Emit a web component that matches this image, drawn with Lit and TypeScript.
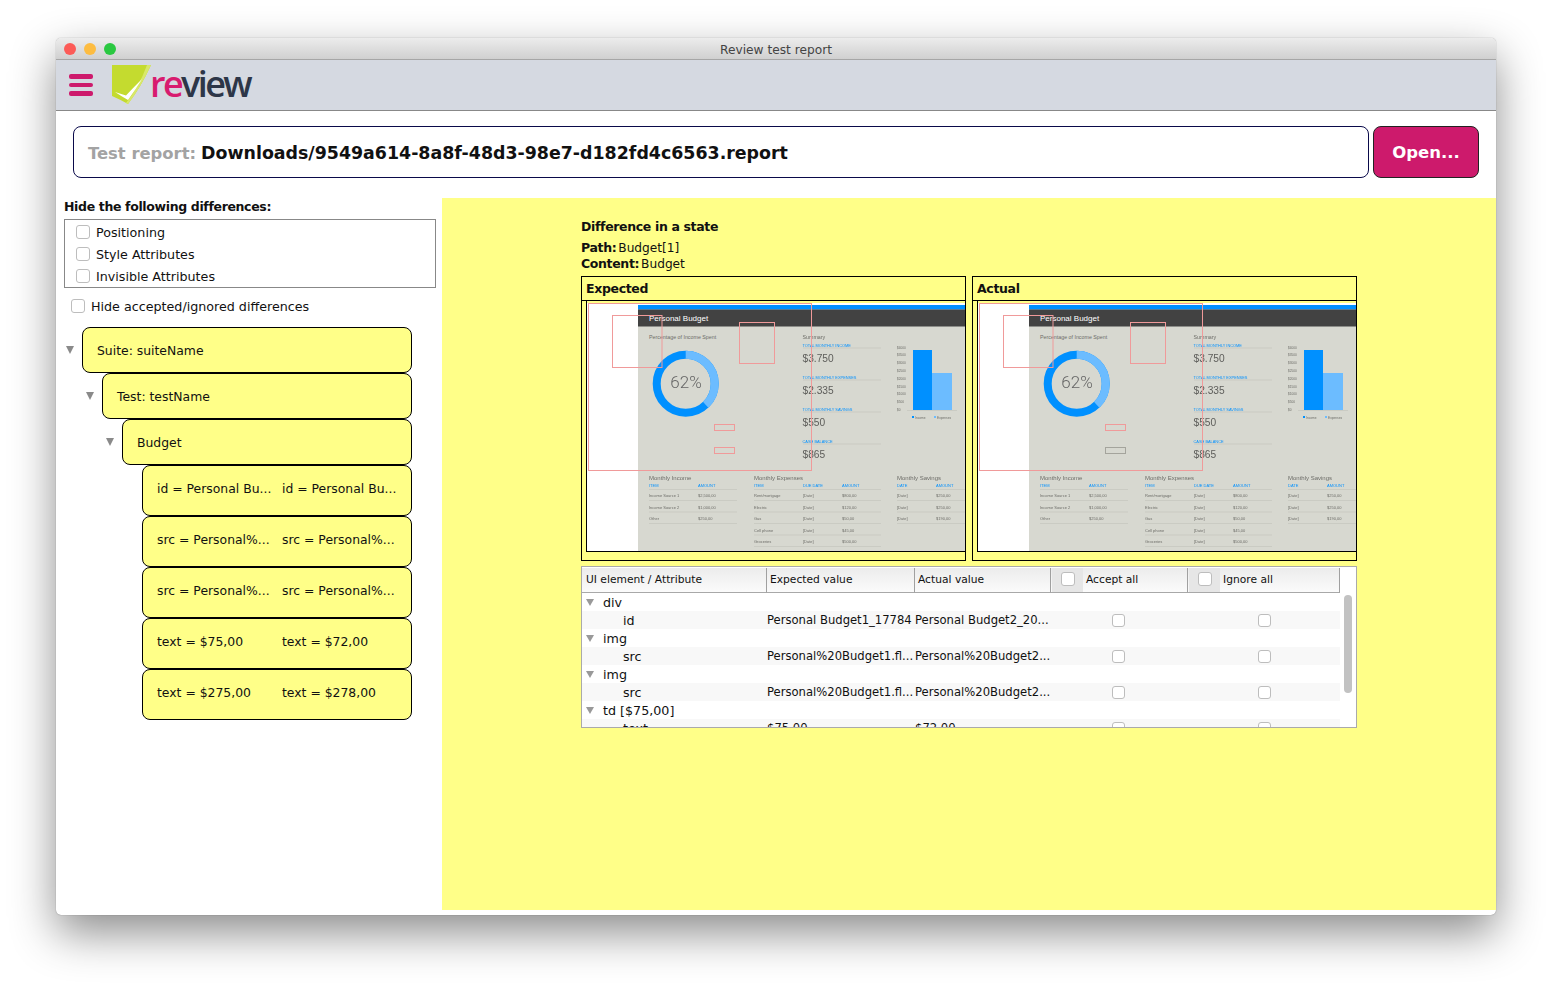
import { LitElement, html, css, svg } from 'lit';
import { customElement, property } from 'lit/decorators.js';

const BLUE = '#0090ff';
const LIGHT = '#6cbcff';
const RED = '#f09a9a';

// the small report picture shown in the Expected and Actual boxes
@customElement('budget-shot')
export class BudgetShot extends LitElement {
  @property({ type: Boolean }) actual = false;

  static styles = css`
    :host {
      display: block;
      width: 380px;
      height: 248px;
      overflow: hidden;
      background: #fff;
    }
    svg {
      display: block;
      font-family: 'Liberation Sans', sans-serif;
      filter: blur(0.25px);
    }
    .muted { fill: #6d6d68; }
  `;

  summary(label: string, value: string, y: number) {
    return svg`
      <text x="215.5" y=${y} font-size="3.9" fill=${BLUE}>${label}</text>
      <line x1="216" x2="294" y1=${y + 1} y2=${y + 1} stroke="#c4c5bd" stroke-width=".7" />
      <text x="215.5" y=${y + 15} font-size="10.2" fill="#5d5d5a">${value}</text>
    `;
  }

  table(title: string, x: number, right: number, cols: { x: number; label: string }[], rows: string[][]) {
    return svg`
      <text x=${x} y="177" font-size="6" class="muted">${title}</text>
      ${cols.map(c => svg`<text x=${c.x} y="184" font-size="4" fill=${BLUE}>${c.label}</text>`)}
      <line x1=${x} x2=${right} y1="186.5" y2="186.5" stroke="#c4c5bd" stroke-width=".7" />
      ${rows.map((row, i) => svg`
        ${row.map((cell, j) => svg`<text x=${cols[j].x} y=${194 + i * 11.5} font-size="4" class="muted">${cell}</text>`)}
        <line x1=${x} x2=${right} y1=${197.5 + i * 11.5} y2=${197.5 + i * 11.5} stroke="#c4c5bd" stroke-width=".7" />
      `)}
    `;
  }

  render() {
    const ticks = ['$4000', '$3500', '$3000', '$2500', '$2000', '$1500', '$1000', '$500', '$0'];
    return html`
      <svg width="380" height="248" viewBox="0 0 380 248">
        <rect x="51" y="2" width="329" height="246" fill="#d7d8d0" />
        <rect x="51" y="2" width="329" height="4.5" fill=${BLUE} />
        <rect x="51" y="6.5" width="329" height="17" fill="#424242" />
        <text x="62" y="18" font-size="8" fill="#fff">Personal Budget</text>

        <text x="62" y="36" font-size="5.3" class="muted">Percentage of Income Spent</text>
        <circle cx="98.7" cy="80.7" r="29" fill="none" stroke=${BLUE} stroke-width="8" />
        <circle cx="98.7" cy="80.7" r="29" fill="none" stroke=${LIGHT} stroke-width="8"
          stroke-dasharray="69 182.2" transform="rotate(-90 98.7 80.7)" />
        <text x="99" y="85" font-size="17" text-anchor="middle" fill="#666" style="font-family: Roboto, sans-serif; font-weight: 300">62%</text>

        <text x="215.5" y="36" font-size="5.3" class="muted">Summary</text>
        ${this.summary('TOTAL MONTHLY INCOME', '$3.750', 44)}
        ${this.summary('TOTAL MONTHLY EXPENSES', '$2.335', 76)}
        ${this.summary('TOTAL MONTHLY SAVINGS', '$550', 108)}
        ${this.summary('CASH BALANCE', '$865', 140)}

        ${ticks.map((t, i) => svg`<text x="310" y=${45.5 + i * 7.8} font-size="3.2" class="muted">${t}</text>`)}
        <line x1="320" x2="370" y1="107.5" y2="107.5" stroke="#c4c5bd" stroke-width=".7" />
        <rect x="326" y="47" width="19" height="60" fill=${BLUE} />
        <rect x="345" y="70" width="20" height="37" fill=${LIGHT} />
        <rect x="325" y="113" width="2" height="2" fill=${BLUE} />
        <text x="328" y="115.5" font-size="3.2" class="muted">Income</text>
        <rect x="347" y="113" width="2" height="2" fill=${LIGHT} />
        <text x="350" y="115.5" font-size="3.2" class="muted">Expenses</text>

        ${this.table('Monthly Income', 62, 150,
          [{ x: 62, label: 'ITEM' }, { x: 111, label: 'AMOUNT' }],
          [['Income Source 1', '$2,500,00'], ['Income Source 2', '$1,000,00'], ['Other', '$250,00']])}
        ${this.table('Monthly Expenses', 167, 294,
          [{ x: 167, label: 'ITEM' }, { x: 216, label: 'DUE DATE' }, { x: 255, label: 'AMOUNT' }],
          [['Rent/mortgage', '[Date]', '$800,00'], ['Electric', '[Date]', '$120,00'], ['Gas', '[Date]', '$50,00'],
           ['Cell phone', '[Date]', '$45,00'], ['Groceries', '[Date]', '$500,00']])}
        ${this.table('Monthly Savings', 310, 380,
          [{ x: 310, label: 'DATE' }, { x: 349, label: 'AMOUNT' }],
          [['[Date]', '$250,00'], ['[Date]', '$250,00'], ['[Date]', '$190,00']])}

        <g fill="none" stroke=${RED} stroke-width="1">
          <rect x="1.5" y="0.5" width="223" height="167" />
          <rect x="25.5" y="12.5" width="49.5" height="52" />
          <rect x="152.5" y="19.5" width="35" height="41" />
          <rect x="127.5" y="121.5" width="20" height="6" />
          <rect x="127.5" y="144.5" width="20" height="6" stroke=${this.actual ? '#a4a49c' : RED} />
        </g>
      </svg>
    `;
  }
}

interface TreeNode {
  depth: number;
  open?: boolean;
  tall?: boolean;
  cells: string[];
}

const TREE: TreeNode[] = [
  { depth: 0, open: true, cells: ['Suite: suiteName'] },
  { depth: 1, open: true, cells: ['Test: testName'] },
  { depth: 2, open: true, cells: ['Budget'] },
  { depth: 3, tall: true, cells: ['id = Personal Bu...', 'id = Personal Bu...'] },
  { depth: 3, tall: true, cells: ['src = Personal%...', 'src = Personal%...'] },
  { depth: 3, tall: true, cells: ['src = Personal%...', 'src = Personal%...'] },
  { depth: 3, tall: true, cells: ['text = $75,00', 'text = $72,00'] },
  { depth: 3, tall: true, cells: ['text = $275,00', 'text = $278,00'] },
];

const ROWS = [
  { name: 'div' },
  { attr: 'id', expected: 'Personal Budget1_17784', actual: 'Personal Budget2_20...' },
  { name: 'img' },
  { attr: 'src', expected: 'Personal%20Budget1.fl...', actual: 'Personal%20Budget2...' },
  { name: 'img' },
  { attr: 'src', expected: 'Personal%20Budget1.fl...', actual: 'Personal%20Budget2...' },
  { name: 'td [$75,00]' },
  { attr: 'text', expected: '$75,00', actual: '$72,00' },
];

@customElement('app-root')
export class AppRoot extends LitElement {
  static styles = css`
    :host {
      display: block;
      padding: 38px 56px 74px;
      font-family: 'DejaVu Sans', sans-serif;
      font-size: 12.7px;
      color: #111;
    }
    .window {
      height: 877px;
      background: #fff;
      border-radius: 5px;
      box-shadow: 0 18px 45px rgba(0, 0, 0, 0.45), 0 0 1px rgba(0, 0, 0, 0.5);
      display: flex;
      flex-direction: column;
      overflow: hidden;
    }
    .titlebar {
      height: 22px;
      flex: none;
      box-sizing: border-box;
      display: flex;
      align-items: center;
      justify-content: center;
      position: relative;
      padding-top: 2px;
      background: linear-gradient(#ececec, #d0d0d0);
      border-bottom: 1px solid #a6a6a6;
      color: #444;
      font-size: 12.2px;
    }
    .lights {
      position: absolute;
      left: 8px;
      top: 5px;
      display: flex;
      gap: 8px;
    }
    .lights i {
      width: 12px;
      height: 12px;
      border-radius: 50%;
    }
    .toolbar {
      height: 51px;
      flex: none;
      box-sizing: border-box;
      display: flex;
      align-items: center;
      padding: 0 0 3px 13px;
      background: #d5d9e1;
      border-bottom: 1px solid #888;
    }
    .burger {
      display: flex;
      flex-direction: column;
      gap: 4px;
      width: 24px;
      margin-top: 3px;
    }
    .burger i {
      height: 4.4px;
      border-radius: 2px;
      background: #cd1a6c;
    }
    .logo {
      display: flex;
      align-items: center;
      margin-left: 18px;
    }
    .wordmark {
      margin-left: -1px;
      font-family: 'Open Sans', sans-serif;
      font-weight: 600;
      font-size: 36px;
      line-height: 40px;
      letter-spacing: -2.6px;
      color: #2d3648;
    }
    .wordmark b {
      font-weight: 600;
      color: #d81b6f;
    }
    .report-row {
      flex: none;
      display: flex;
      gap: 4px;
      padding: 15px 17px 20px;
    }
    .report {
      flex: 1;
      height: 52px;
      box-sizing: border-box;
      display: flex;
      align-items: center;
      padding: 2px 14px 0;
      border: 1px solid #0a0a4a;
      border-radius: 8px;
      font-size: 17.4px;
      font-weight: 700;
      white-space: nowrap;
    }
    .report span {
      color: #a3a3a3;
      font-size: 16.4px;
      margin-right: 5px;
    }
    .open {
      width: 106px;
      height: 52px;
      box-sizing: border-box;
      border: 1px solid #222;
      border-radius: 8px;
      background: #cd1a6c;
      color: #fff;
      font: 700 16.5px 'DejaVu Sans', sans-serif;
      padding: 0;
    }
    .main {
      flex: 1;
      display: flex;
      padding-bottom: 5px;
      min-height: 0;
    }
    .side {
      width: 386px;
      flex: none;
      box-sizing: border-box;
      padding: 0 6px 0 8px;
    }
    .side h2,
    .detail h3,
    .shot h4,
    .meta b {
      font-size: 12.5px;
      font-weight: 700;
      letter-spacing: -0.35px;
    }
    .side h2 {
      margin: 0;
      line-height: 18px;
    }
    .filters {
      margin: 3px 0 0;
      height: 69px;
      box-sizing: border-box;
      border: 1px solid #888;
      padding: 1px 0 0 11px;
    }
    .check-row {
      display: flex;
      align-items: center;
      gap: 6px;
      height: 22px;
    }
    .hide-row {
      padding-left: 7px;
      margin: 7px 0 10px;
    }
    input {
      appearance: none;
      width: 14px;
      height: 14px;
      margin: 0;
      flex: none;
      box-sizing: border-box;
      background: #fff;
      border: 1px solid #bdbdbd;
      border-radius: 3px;
    }
    .tree-row {
      display: flex;
      align-items: center;
      padding-right: 24px;
    }
    .twisty {
      width: 18px;
      flex: none;
      display: flex;
      padding-left: 2px;
      box-sizing: border-box;
    }
    .twisty::before {
      content: '';
      width: 0;
      height: 0;
      border-left: 4.2px solid transparent;
      border-right: 4.2px solid transparent;
      border-top: 8px solid #8a8a8a;
    }
    .leaf .twisty::before {
      display: none;
    }
    .node {
      flex: 1;
      height: 46px;
      box-sizing: border-box;
      display: flex;
      align-items: center;
      padding-left: 14px;
      background: #ffff88;
      border: 1px solid #000;
      border-radius: 8px;
      white-space: nowrap;
      font-size: 12.4px;
    }
    .node.tall {
      height: 51px;
      padding-bottom: 4px;
    }
    .node span {
      width: 125px;
      flex: none;
    }
    .detail {
      flex: 1;
      background: #ffff88;
      padding: 20px 139px 0;
      box-sizing: border-box;
    }
    .detail h3 {
      margin: 0 0 4px;
      line-height: 18px;
    }
    .meta {
      line-height: 16px;
      font-size: 12.2px;
    }
    .meta b {
      margin-right: -2px;
    }
    .shots {
      display: flex;
      gap: 6px;
      margin-top: 4px;
    }
    .shot {
      width: 385px;
      height: 285px;
      box-sizing: border-box;
      border: 1px solid #000;
    }
    .shot h4 {
      margin: 0;
      height: 24px;
      box-sizing: border-box;
      padding-left: 4px;
      line-height: 23px;
      border-bottom: 1px solid #000;
    }
    .shot-frame {
      margin-left: 4px;
      box-sizing: border-box;
      height: 251px;
      padding: 2px 0 0 0;
      overflow: hidden;
      border: 1px solid #000;
      border-width: 0 0 1px 1px;
    }
    .grid {
      margin-top: 5px;
      width: 776px;
      height: 162px;
      box-sizing: border-box;
      background: #fff;
      border: 1px solid #aaa;
      overflow: hidden;
    }
    .head {
      display: grid;
      grid-template-columns: 185px 148px 136px 137px 152px;
      height: 26px;
      box-sizing: border-box;
      padding-top: 1px;
      font-size: 10.7px;
    }
    .head div {
      display: flex;
      align-items: center;
      padding: 0 0 2px 3px;
      background: linear-gradient(#ececec, #fbfbfb);
      border-right: 1px solid #a0a0a0;
      border-bottom: 1px solid #a8a8a8;
      white-space: nowrap;
    }
    .head div:first-child {
      padding-left: 4px;
    }
    .head .all {
      padding-left: 1px;
      gap: 3px;
    }
    .all span {
      display: flex;
      align-items: center;
      padding: 0 0 2px 9px;
      margin-bottom: -2px;
      box-sizing: border-box;
      width: 31px;
      align-self: stretch;
      background: #e6e6e6;
    }
    .body {
      position: relative;
      height: 135px;
      overflow: hidden;
    }
    .row {
      display: grid;
      grid-template-columns: 185px 148px 136px 145px 137px;
      height: 18px;
      align-items: center;
      white-space: nowrap;
      width: 758px;
    }
    .row.alt {
      background: #f8f8f8;
    }
    .row .value {
      font-size: 11.6px;
    }
    .row .name {
      display: flex;
      align-items: center;
      gap: 9px;
      padding-left: 4px;
    }
    .row .arrow {
      width: 0;
      height: 0;
      border-left: 4.5px solid transparent;
      border-right: 4.5px solid transparent;
      border-top: 7px solid #999;
    }
    .row .attr {
      padding-left: 41px;
    }
    .row .tick {
      display: flex;
      padding-left: 61px;
    }
    .row .tick.second {
      padding-left: 62px;
    }
    .row input {
      width: 13px;
      height: 13px;
    }
    .scroll {
      position: absolute;
      right: 4px;
      top: 2px;
      width: 8px;
      height: 98px;
      border-radius: 4px;
      background: #c2c2c2;
    }
  `;

  treeRow(n: TreeNode) {
    return html`
      <div class="tree-row ${n.open ? '' : 'leaf'}" style="padding-left: ${n.depth * 20}px">
        <div class="twisty"></div>
        <div class="node ${n.tall ? 'tall' : ''}">
          ${n.cells.length > 1 ? n.cells.map(c => html`<span>${c}</span>`) : n.cells[0]}
        </div>
      </div>
    `;
  }

  shot(title: string, actual: boolean) {
    return html`
      <section class="shot">
        <h4>${title}</h4>
        <div class="shot-frame"><budget-shot ?actual=${actual}></budget-shot></div>
      </section>
    `;
  }

  render() {
    return html`
      <div class="window">
        <div class="titlebar">
          <div class="lights">
            <i style="background:#fc5b57"></i>
            <i style="background:#fdbc40"></i>
            <i style="background:#2ac840"></i>
          </div>
          Review test report
        </div>
        <div class="toolbar">
          <div class="burger"><i></i><i></i><i></i></div>
          <div class="logo">
            <svg width="40" height="42" viewBox="0 0 40 42">
              <path d="M1 2 L40 2 Q30 24 17 41 Q8 36 1 33 Z" fill="#c4db2f" />
              <path d="M40 2 Q30 24 17 41 L15 40 Q28 24 36 2 Z" fill="#d8e86a" />
              <path d="M4 29 L15 32.5 Q22 25 31 16 Q25 26 17 37 Q10 33 4 29 Z" fill="#fff" />
            </svg>
            <div class="wordmark"><b>re</b>view</div>
          </div>
        </div>
        <div class="report-row">
          <div class="report"><span>Test report:</span>Downloads/9549a614-8a8f-48d3-98e7-d182fd4c6563.report</div>
          <button class="open">Open...</button>
        </div>
        <div class="main">
          <div class="side">
            <h2>Hide the following differences:</h2>
            <div class="filters">
              <label class="check-row"><input type="checkbox" />Positioning</label>
              <label class="check-row"><input type="checkbox" />Style Attributes</label>
              <label class="check-row"><input type="checkbox" />Invisible Attributes</label>
            </div>
            <label class="check-row hide-row"><input type="checkbox" />Hide accepted/ignored differences</label>
            ${TREE.map(n => this.treeRow(n))}
          </div>
          <div class="detail">
            <h3>Difference in a state</h3>
            <div class="meta"><b>Path:</b> Budget[1]</div>
            <div class="meta"><b>Content:</b> Budget</div>
            <div class="shots">
              ${this.shot('Expected', false)}
              ${this.shot('Actual', true)}
            </div>
            <div class="grid">
              <div class="head">
                <div>UI element / Attribute</div>
                <div>Expected value</div>
                <div>Actual value</div>
                <div class="all"><span><input type="checkbox" /></span>Accept all</div>
                <div class="all"><span><input type="checkbox" /></span>Ignore all</div>
              </div>
              <div class="body">
                ${ROWS.map((r, i) => r.attr
                  ? html`<div class="row ${i % 2 ? 'alt' : ''}">
                      <div class="attr">${r.attr}</div>
                      <div class="value">${r.expected}</div>
                      <div class="value">${r.actual}</div>
                      <div class="tick"><input type="checkbox" /></div>
                      <div class="tick second"><input type="checkbox" /></div>
                    </div>`
                  : html`<div class="row">
                      <div class="name"><i class="arrow"></i>${r.name}</div>
                    </div>`)}
                <div class="scroll"></div>
              </div>
            </div>
          </div>
        </div>
      </div>
    `;
  }
}
